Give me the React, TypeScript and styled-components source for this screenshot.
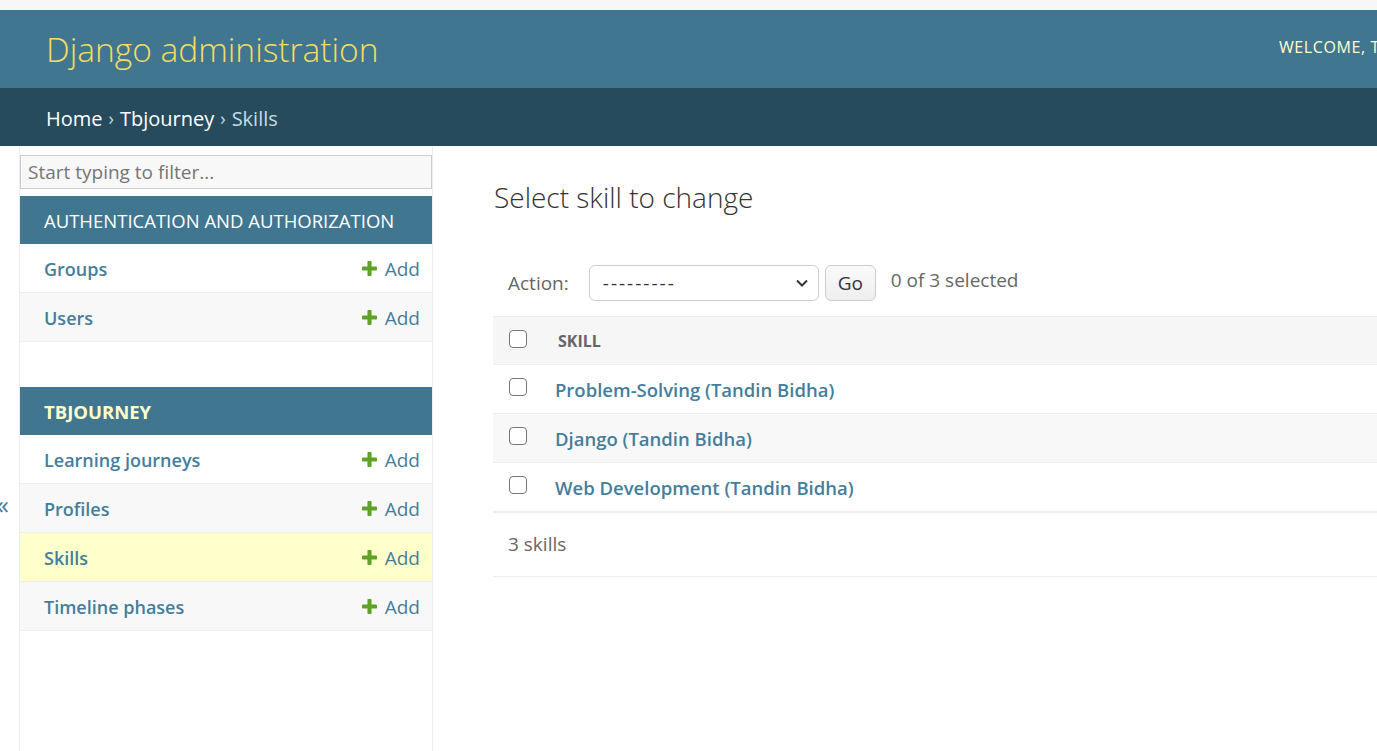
import React from "react";
import styled, { createGlobalStyle } from "styled-components";

const GlobalStyle = createGlobalStyle`
	html, body {
		margin: 0;
		padding: 0;
		background: #fff;
		overflow: hidden;
	}
	body {
		font-family: "Open Sans", "Noto Sans", sans-serif;
		color: #333;
	}
	* {
		box-sizing: border-box;
	}
`;

const Page = styled.div`
	width: 1377px;
	min-height: 751px;
	display: flex;
	flex-direction: column;
	overflow: hidden;
`;

const TopStrip = styled.div`
	height: 10px;
	background: #f7f7f7;
`;

const Header = styled.header`
	height: 78px;
	background: #417690;
	display: flex;
	align-items: center;
	padding-left: 46px;
	overflow: hidden;
	white-space: nowrap;
`;

const Branding = styled.div`
	flex: 0 0 1233px;
`;

const SiteName = styled.h1`
	margin: 0;
	font-size: 33.5px;
	font-weight: 300;
	color: #f5dd5d;
	line-height: 1;
	padding-top: 2px;
`;

const UserTools = styled.div`
	flex-shrink: 0;
	font-size: 16px;
	letter-spacing: 0.6px;
	text-transform: uppercase;
	color: #ffc;
	padding-bottom: 4px;
`;

const Breadcrumbs = styled.nav`
	height: 58px;
	background: #264b5d;
	display: flex;
	align-items: center;
	padding: 2px 0 0 46px;
	font-size: 20px;
	color: #c4dce8;
	gap: 6px;
`;

const Crumb = styled.a`
	color: #fff;
	text-decoration: none;
`;

const Sep = styled.span`
	font-size: 18px;
	color: #c4dce8;
`;

const Main = styled.div`
	flex: 1;
	display: flex;
	min-height: 605px;
`;

const Toggle = styled.div`
	flex: 0 0 20px;
	border-right: 1px solid #eee;
	padding-top: 345px;
	font-size: 26px;
	color: #447e9b;
	line-height: 1;
	overflow: hidden;

	span {
		display: block;
		margin-left: -4px;
	}
`;

const NavSidebar = styled.aside`
	flex: 0 0 413px;
	border-right: 1px solid #eee;
	display: flex;
	flex-direction: column;
`;

const Filter = styled.input`
	margin: 9px 0 7px;
	height: 34px;
	width: 412px;
	padding: 0 7px;
	font-family: inherit;
	font-size: 19px;
	color: #333;
	background: #f8f8f8;
	border: 1px solid #ccc;

	&::placeholder {
		color: #757575;
	}
`;

const Module = styled.div`
	margin-bottom: 45px;
`;

const Caption = styled.div<{ $current?: boolean }>`
	height: 48px;
	display: flex;
	align-items: center;
	padding-left: 24px;
	background: #417690;
	font-size: 18.5px;
	text-transform: uppercase;
	color: ${(p) => (p.$current ? "#ffc" : "#fff")};
	font-weight: ${(p) => (p.$current ? 700 : 400)};
`;

const ModelRow = styled.div<{ $bg: string }>`
	height: 49px;
	display: flex;
	align-items: center;
	justify-content: space-between;
	padding: 1px 12px 0 24px;
	border-bottom: 1px solid #eee;
	background: ${(p) => p.$bg};
`;

const ModelLink = styled.a`
	font-size: 18px;
	font-weight: 600;
	color: #447e9b;
	text-decoration: none;
`;

const AddLink = styled.a`
	display: flex;
	align-items: center;
	gap: 8px;
	font-size: 19px;
	color: #447e9b;
	text-decoration: none;
`;

const Content = styled.main`
	flex: 1;
	padding: 30px 0 0 60px;
	min-width: 0;
`;

const Title = styled.h1`
	margin: 0 0 30px 1px;
	font-size: 28px;
	font-weight: 300;
	line-height: 43px;
	color: #333;
`;

const Actions = styled.div`
	height: 67px;
	padding: 0 15px;
	display: flex;
	align-items: center;
	font-size: 19px;
	color: #666;
`;

const SelectWrap = styled.div`
	position: relative;
	margin-left: 20px;
	width: 230px;
	height: 36px;

	svg {
		position: absolute;
		right: 10px;
		top: 13px;
		pointer-events: none;
	}
`;

const Select = styled.select`
	appearance: none;
	width: 100%;
	height: 100%;
	padding: 0 13px;
	font-family: inherit;
	font-size: 19px;
	letter-spacing: 2px;
	color: #333;
	background: #fff;
	border: 1px solid #ccc;
	border-radius: 6px;
`;

const GoButton = styled.button`
	margin-left: 6px;
	height: 36px;
	width: 51px;
	font-family: inherit;
	font-size: 19px;
	color: #333;
	background: linear-gradient(#fafafa, #eee);
	border: 1px solid #ccc;
	border-radius: 6px;
	padding: 0;
`;

const Counter = styled.span`
	margin-left: 15px;
	margin-bottom: 5px;
`;

const Table = styled.table`
	width: 100%;
	border-collapse: collapse;
	border-top: 1px solid #eee;
`;

const HeadCell = styled.th`
	height: 48px;
	background: #f6f6f6;
	border-bottom: 1px solid #eee;
	text-align: left;
	padding: 0 0 0 15px;
	font-size: 16px;
	font-weight: 700;
	color: #666;
	text-transform: uppercase;
`;

const CheckCell = styled.td`
	width: 50px;
	padding: 0 0 0 16px;
	vertical-align: middle;
`;

const HeadCheckCell = styled(HeadCell)`
	width: 50px;
	padding-left: 16px;
`;

const Row = styled.tr<{ $bg: string }>`
	height: 49px;
	background: ${(p) => p.$bg};
	border-bottom: 1px solid #eee;

	&:last-child {
		border-bottom: 2px solid #eee;
	}
`;

const Cell = styled.td`
	padding: 1px 0 0 12px;
	vertical-align: middle;
`;

const Checkbox = styled.input`
	appearance: none;
	display: block;
	width: 18px;
	height: 18px;
	margin: -4px 0 0 0;
	border: 1.5px solid #767676;
	border-radius: 4px;
	background: #fff;
`;

const ItemLink = styled.a`
	font-size: 18.5px;
	font-weight: 600;
	color: #447e9b;
	text-decoration: none;
`;

const Paginator = styled.p`
	margin: 0;
	height: 64px;
	line-height: 63px;
	padding-left: 15px;
	font-size: 19px;
	color: #666;
	border-bottom: 1px solid #eee;
`;

function PlusIcon() {
	return (
		<svg width="15" height="15" viewBox="192 192 1408 1408">
			<path
				fill="#5fa225"
				d="M1600 796v192q0 40-28 68t-68 28h-416v416q0 40-28 68t-68 28h-192q-40 0-68-28t-28-68v-416h-416q-40 0-68-28t-28-68v-192q0-40 28-68t68-28h416v-416q0-40 28-68t68-28h192q40 0 68 28t28 68v416h416q40 0 68 28t28 68z"
			/>
		</svg>
	);
}

const apps = [
	{
		name: "Authentication and Authorization",
		current: false,
		models: [
			{ name: "Groups", bg: "#fff" },
			{ name: "Users", bg: "#f8f8f8" },
		],
	},
	{
		name: "Tbjourney",
		current: true,
		models: [
			{ name: "Learning journeys", bg: "#fff" },
			{ name: "Profiles", bg: "#f8f8f8" },
			{ name: "Skills", bg: "#ffc" },
			{ name: "Timeline phases", bg: "#f8f8f8" },
		],
	},
];

const skills = [
	{ name: "Problem-Solving (Tandin Bidha)", bg: "#fff" },
	{ name: "Django (Tandin Bidha)", bg: "#f8f8f8" },
	{ name: "Web Development (Tandin Bidha)", bg: "#fff" },
];

export default function App() {
	return (
		<Page>
			<GlobalStyle />
			<TopStrip />
			<Header>
				<Branding>
					<SiteName>Django administration</SiteName>
				</Branding>
				<UserTools>Welcome, Tandin. View site / Change password / Log out</UserTools>
			</Header>
			<Breadcrumbs>
				<Crumb href="#">Home</Crumb>
				<Sep>›</Sep>
				<Crumb href="#">Tbjourney</Crumb>
				<Sep>›</Sep>
				<span>Skills</span>
			</Breadcrumbs>
			<Main>
				<Toggle>
					<span>«</span>
				</Toggle>
				<NavSidebar>
					<Filter placeholder="Start typing to filter..." />
					{apps.map((app) => (
						<Module key={app.name}>
							<Caption $current={app.current}>{app.name}</Caption>
							{app.models.map((m) => (
								<ModelRow key={m.name} $bg={m.bg}>
									<ModelLink href="#">{m.name}</ModelLink>
									<AddLink href="#">
										<PlusIcon />
										Add
									</AddLink>
								</ModelRow>
							))}
						</Module>
					))}
				</NavSidebar>
				<Content>
					<Title>Select skill to change</Title>
					<Actions>
						<label>Action:</label>
						<SelectWrap>
							<Select defaultValue="">
								<option value="">---------</option>
								<option value="delete">Delete selected skills</option>
							</Select>
							<svg width="14" height="10" viewBox="0 0 14 10">
								<path d="M2 2.5l5 5 5-5" fill="none" stroke="#333" strokeWidth="2" />
							</svg>
						</SelectWrap>
						<GoButton>Go</GoButton>
						<Counter>0 of 3 selected</Counter>
					</Actions>
					<Table>
						<thead>
							<tr>
								<HeadCheckCell>
									<Checkbox type="checkbox" />
								</HeadCheckCell>
								<HeadCell>Skill</HeadCell>
							</tr>
						</thead>
						<tbody>
							{skills.map((s) => (
								<Row key={s.name} $bg={s.bg}>
									<CheckCell>
										<Checkbox type="checkbox" />
									</CheckCell>
									<Cell>
										<ItemLink href="#">{s.name}</ItemLink>
									</Cell>
								</Row>
							))}
						</tbody>
					</Table>
					<Paginator>3 skills</Paginator>
				</Content>
			</Main>
		</Page>
	);
}
